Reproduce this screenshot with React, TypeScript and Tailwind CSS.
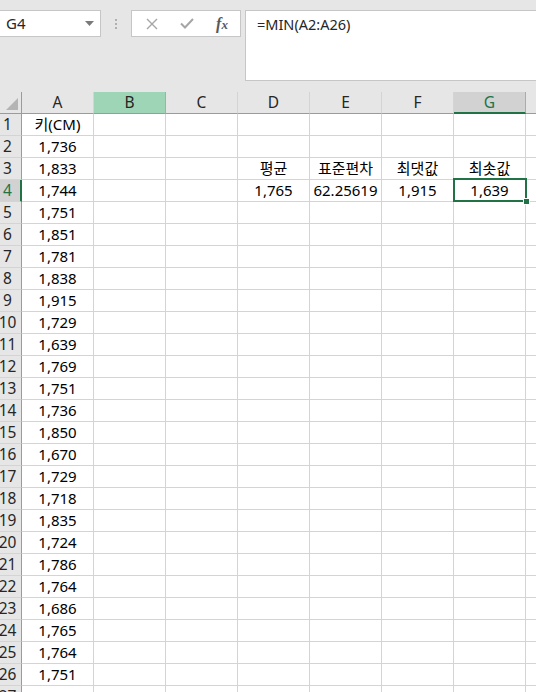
import React from "react";

const COLS = ["A", "B", "C", "D", "E", "F", "G", "H"];

const colA = [
  "키(CM)", "1,736", "1,833", "1,744", "1,751", "1,851", "1,781", "1,838", "1,915",
  "1,729", "1,639", "1,769", "1,751", "1,736", "1,850", "1,670", "1,729", "1,718",
  "1,835", "1,724", "1,786", "1,764", "1,686", "1,765", "1,764", "1,751", "",
];

const extra: Record<string, string> = {
  "3D": "평균",
  "3E": "표준편차",
  "3F": "최댓값",
  "3G": "최솟값",
  "4D": "1,765",
  "4E": "62.25619",
  "4F": "1,915",
  "4G": "1,639",
};

function ColHeader({ name }: { name: string }) {
  if (name === "B") {
    return (
      <div className="flex h-[22px] items-center justify-center border-r border-b border-r-[#ababab] border-b-[#9b9b9b] bg-[#9fd5b7] text-[15.5px] text-[#262626]">
        {name}
      </div>
    );
  }
  if (name === "G") {
    return (
      <div className="flex h-[22px] items-center justify-center border-r border-b-2 border-r-[#ababab] border-b-[#217346] bg-[#d2d2d2] pt-[1px] text-[15.5px] text-[#217346]">
        {name}
      </div>
    );
  }
  return (
    <div className="flex h-[22px] items-center justify-center border-r border-b border-r-[#d4d4d4] border-b-[#9b9b9b] text-[15.5px] text-[#262626]">
      {name === "H" ? "" : name}
    </div>
  );
}

function RowHeader({ n }: { n: number }) {
  const active = n === 4;
  return (
    <div
      className={
        active
          ? "flex h-[22px] items-center justify-center overflow-visible border-r-2 border-b border-r-[#217346] border-b-[#d4d4d4] bg-[#d2d2d2] pr-[5px] text-[15.5px] text-[#217346]"
          : "flex h-[22px] items-center justify-center overflow-visible border-r border-b border-r-[#9b9b9b] border-b-[#d4d4d4] bg-[#e6e6e6] pr-[6px] text-[15.5px] text-[#262626]"
      }
    >
      <span className="whitespace-nowrap">{n}</span>
    </div>
  );
}

function Cell({ text, selected }: { text: string; selected?: boolean }) {
  return (
    <div className="relative flex h-[22px] items-center justify-center border-r border-b border-[#d4d4d4] text-[15px] text-black">
      <span className="whitespace-nowrap">{text}</span>
      {selected && (
        <div className="pointer-events-none absolute top-[-2px] right-[-2px] bottom-[-1px] left-[-1px] z-10 border-2 border-[#217346]">
          <div className="absolute right-[-5px] bottom-[-5px] h-[7px] w-[7px] border border-white bg-[#217346]" />
        </div>
      )}
    </div>
  );
}

export default function App() {
  const rows = Array.from({ length: 27 }, (_, i) => i + 1);
  return (
    <div
      className="h-[692px] w-[536px] overflow-hidden bg-white"
      style={{ fontFamily: '"Noto Sans", "Noto Sans CJK KR", sans-serif' }}
    >
      {/* Formula bar */}
      <div className="flex h-[92px] items-start bg-[#e6e6e6] pt-[10px]">
        <div className="flex h-[27px] w-[101px] items-center justify-between border border-l-0 border-[#c6c6c6] bg-white pl-[6px] pr-[6px] text-[15px] text-[#262626]">
          <span className="leading-none">G4</span>
          <svg width="9" height="5" viewBox="0 0 9 5">
            <path d="M0 0 L9 0 L4.5 5 Z" fill="#7a7a7a" />
          </svg>
        </div>
        <div className="flex h-[27px] w-[30px] flex-col items-center justify-center gap-[2px]">
          <div className="h-[2px] w-[2px] bg-[#b0b0b0]" />
          <div className="h-[2px] w-[2px] bg-[#b0b0b0]" />
          <div className="h-[2px] w-[2px] bg-[#b0b0b0]" />
        </div>
        <div className="flex h-[27px] w-[110px] items-center border border-[#c6c6c6] bg-white">
          <div className="flex w-[36px] justify-center pl-[4px]">
            <svg width="12" height="12" viewBox="0 0 12 12">
              <path d="M1 1 L11 11 M11 1 L1 11" stroke="#a6a6a6" strokeWidth="1.4" />
            </svg>
          </div>
          <div className="flex w-[36px] justify-center pl-[2px]">
            <svg width="14" height="11" viewBox="0 0 14 11">
              <path d="M1 5.5 L5 9.5 L13 1" stroke="#a6a6a6" strokeWidth="2" fill="none" />
            </svg>
          </div>
          <div
            className="flex w-[36px] justify-center text-[16px] font-bold italic text-[#595959]"
            style={{ fontFamily: '"Liberation Serif", serif' }}
          >
            <span className="leading-none">
              f<span className="text-[13px]">x</span>
            </span>
          </div>
        </div>
        <div className="ml-[4px] h-[71px] flex-1 border border-r-0 border-[#c6c6c6] bg-white pl-[11px] pt-[3px] text-[14.5px] text-[#262626]">
          =MIN(A2:A26)
        </div>
      </div>

      {/* Sheet grid */}
      <div className="grid grid-cols-[22px_72px_72px_72px_72px_72px_72px_72px_72px] bg-[#e6e6e6]">
        <div className="relative h-[22px] border-r border-b border-r-[#9b9b9b] border-b-[#9b9b9b]">
          <svg className="absolute right-[3px] bottom-[3px]" width="12" height="12" viewBox="0 0 12 12">
            <path d="M12 0 L12 12 L0 12 Z" fill="#b4b4b4" />
          </svg>
        </div>
        {COLS.map((c) => (
          <ColHeader key={c} name={c} />
        ))}
      </div>
      <div className="grid grid-cols-[22px_72px_72px_72px_72px_72px_72px_72px_72px]">
        {rows.map((r) => (
          <React.Fragment key={r}>
            <RowHeader n={r} />
            {COLS.map((c) => {
              const text = c === "A" ? colA[r - 1] : extra[`${r}${c}`] ?? "";
              return <Cell key={c} text={text} selected={r === 4 && c === "G"} />;
            })}
          </React.Fragment>
        ))}
      </div>
    </div>
  );
}
